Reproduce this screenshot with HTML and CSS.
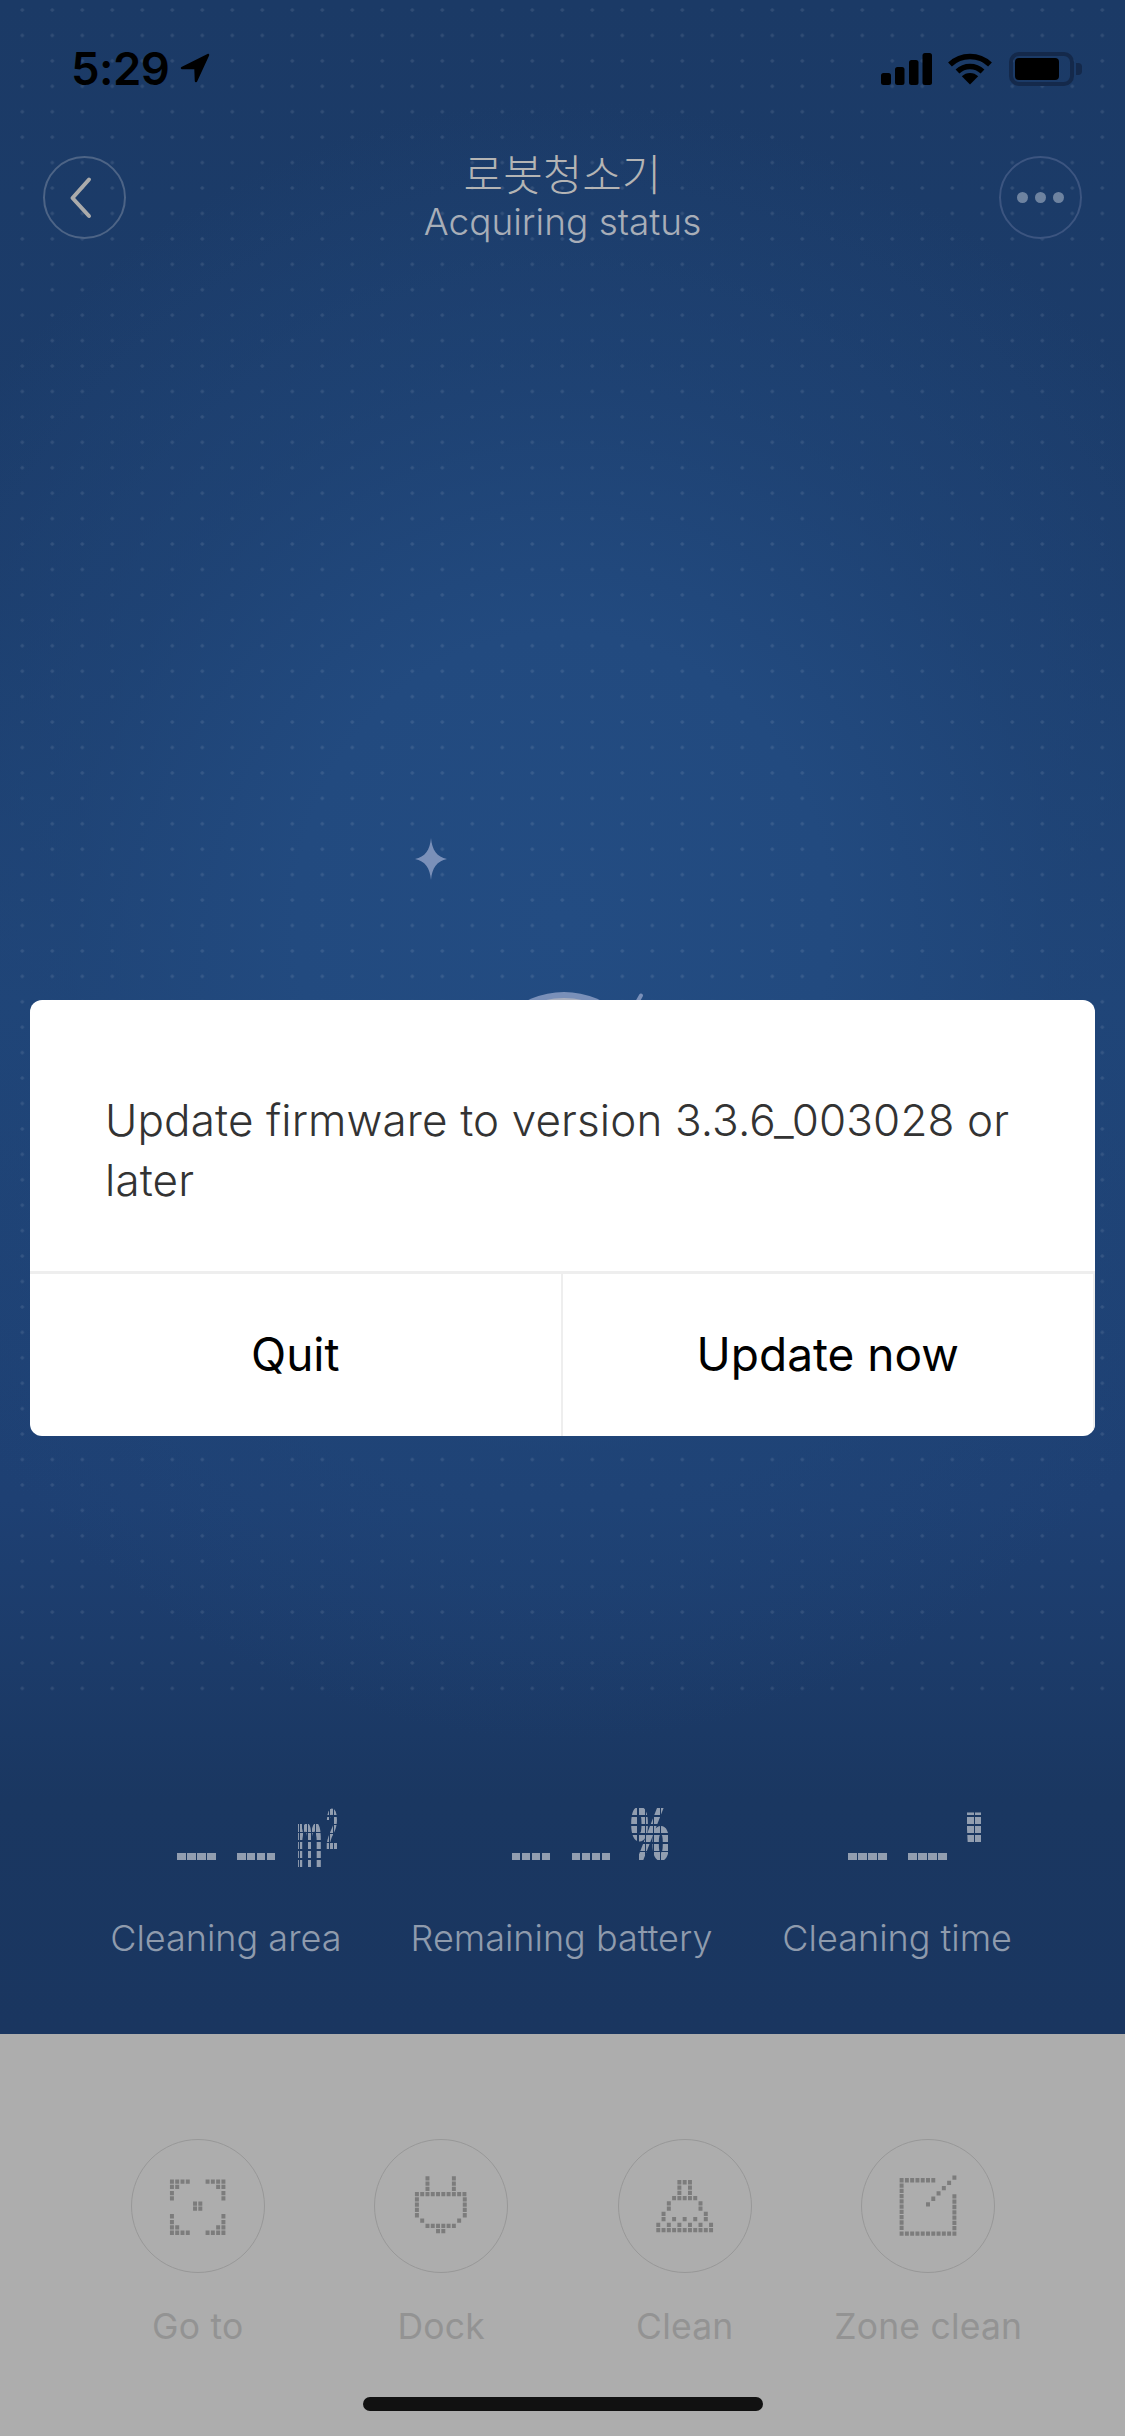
FILE: index.html
```html
<!DOCTYPE html>
<html lang="en">
<head>
<meta charset="utf-8">
<title>로봇청소기</title>
<link rel="stylesheet" href="styles.css">
</head>
<body>
<div class="screen">
  <svg class="grid" width="1125" height="1705" aria-hidden="true">
    <defs>
      <pattern id="plus" x="7.3" y="-2.7" width="30" height="25.43" patternUnits="userSpaceOnUse">
        <path d="M15 10.7v4M13 12.7h4" stroke="#fff" stroke-opacity=".13" stroke-width="1" fill="none"/>
      </pattern>
    </defs>
    <rect width="1125" height="1705" fill="url(#plus)"/>
  </svg>

  <div class="status">
    <div class="status-left">
      <span class="time">5:29</span>
      <svg class="arrow" width="30" height="30" viewBox="0 0 30 30"><path d="M28 2 2 15h13.5L16 28z" fill="#000" stroke="#000" stroke-width="2.5" stroke-linejoin="round"/></svg>
    </div>
    <div class="status-right">
      <svg width="51" height="32" viewBox="0 0 51 32"><rect x="0" y="20" width="10" height="12" rx="2.5"/><rect x="14" y="14" width="9.5" height="18" rx="2.5"/><rect x="28" y="7" width="9.5" height="25" rx="2.5"/><rect x="41.500" y="0" width="9.500" height="32" rx="2.5"/></svg>
      <svg class="wifi" width="46" height="34" viewBox="0 0 46 34"><path d="M3 13.500A29 29 0 0 1 43 13.500M10.500 20.500A18 18 0 0 1 35.500 20.500" fill="none" stroke="#000" stroke-width="5.500"/><path d="M23 33.500 14.800 25.300A11.600 11.600 0 0 1 31.200 25.300z"/></svg>
      <div class="battery"><div class="battery-fill"></div></div>
      <div class="battery-cap"></div>
    </div>
  </div>

  <header class="nav">
    <button class="round back">
      <svg width="30" height="45" viewBox="0 0 30 45"><path d="M24 4.500 7.500 23 24 41" fill="none" stroke="#ababab" stroke-width="4" stroke-linecap="round" stroke-linejoin="round"/></svg>
    </button>
    <div class="title-block">
      <div class="title">로봇청소기</div>
      <div class="subtitle">Acquiring status</div>
    </div>
    <button class="round more"><i></i><i></i><i></i></button>
  </header>

  <main class="hero"></main>

  <section class="stats">
    <div class="stat">
      <div class="value"><span class="dash"></span><span class="dash"></span><span class="unit unit-m"><span>m</span></span><span class="unit unit-sq"><span>2</span></span></div>
      <div class="stat-label">Cleaning area</div>
    </div>
    <div class="stat">
      <div class="value"><span class="dash"></span><span class="dash"></span><span class="unit unit-pct"><span>%</span></span></div>
      <div class="stat-label">Remaining battery</div>
    </div>
    <div class="stat">
      <div class="value"><span class="dash"></span><span class="dash"></span><span class="unit unit-min"><span>'</span></span></div>
      <div class="stat-label">Cleaning time</div>
    </div>
  </section>

  <nav class="panel">
    <div class="action">
      <div class="ring"><svg viewBox="92 119 400 400"><path class="cells" d="M207 245h60M315 245h60M207 261h28M347 261h28M207 280h12M363 280h12M207 296h12M363 296h12M277 312h28M277 327h28M207 350h12M363 350h12M207 368h12M363 368h12M207 384h28M347 384h28M207 400h60M315 400h60"/></svg></div>
      <span>Go to</span>
    </div>
    <div class="action">
      <div class="ring"><svg viewBox="826 119 400 400"><path class="cells" d="M979 235h12M1059 235h12M979 251h12M1059 251h12M979 267h12M1059 267h12M947 283h156M947 299h12M1092 299h12M947 315h12M1092 315h12M947 331h12M1092 331h12M947 347h12M1092 347h12M963 363h12M1075 363h12M979 379h92M1011 395h28"/></svg></div>
      <span>Dock</span>
    </div>
    <div class="action">
      <div class="ring"><svg viewBox="116 119 400 400"><path class="cells" d="M293 247h44M293 263h12M325 263h12M293 279h12M325 279h12M277 295h76M261 311h12M357 311h12M261 327h12M357 327h12M245 343h12M373 343h12M245 359h12M277 359h12M309 359h12M341 359h12M373 359h12M229 376h12M261 376h12M293 376h12M325 376h12M357 376h12M389 376h12M229 392h172"/></svg></div>
      <span>Clean</span>
    </div>
    <div class="action">
      <div class="ring"><svg viewBox="845 119 400 400"><path class="cells" d="M959 241h108M959 257h12M959 273h12M959 289h12M959 305h12M959 321h12M959 337h12M959 353h12M959 369h12M959 385h12M1119 290h12M1119 306h12M1119 322h12M1119 338h12M1119 354h12M1119 370h12M1119 386h12M959 403h172M1119 233h12M1103 249h12M1087 265h12M1071 281h12M1055 297h12M1039 314h12"/></svg></div>
      <span>Zone clean</span>
    </div>
  </nav>

  <div class="sparkle">
    <svg width="32" height="42" viewBox="0 0 32 42"><path d="M16 0C17 12 22 19 32 21 22 23 17 30 16 42 15 30 10 23 0 21 10 19 15 12 16 0z" fill="#7a90b9"/></svg>
  </div>
  <div class="moon"><div class="moon-inner"></div></div>
  <div class="streak"></div>

  <div class="dialog">
    <p class="dialog-text">Update firmware to version 3.3.6_003028 or later</p>
    <div class="dialog-actions">
      <div class="dialog-btn">Quit</div>
      <div class="dialog-btn">Update now</div>
    </div>
  </div>

  <div class="home"></div>
</div>
</body>
</html>
```
FILE: styles.css
```css
* { box-sizing: border-box; }
html, body { margin: 0; padding: 0; }
body { width: 1125px; height: 2436px; overflow: hidden; font-family: Inter, "Noto Sans CJK KR", sans-serif; }

.screen {
  position: relative;
  width: 1125px;
  height: 2436px;
  display: flex;
  flex-direction: column;
  overflow: hidden;
  background:
    radial-gradient(ellipse 760px 820px at 50% 920px, #234c82 0%, #224a7f 35%, rgba(32,70,121,.6) 65%, rgba(28,58,102,0) 100%),
    linear-gradient(#1b3a66 0, #1c3d6c 600px, #1f4477 1000px, #1e4073 1500px, #1a3761 1800px, #1a3660 2034px);
}

.grid { position: absolute; left: 0; top: 0; }

/* status bar */
.status {
  position: relative;
  height: 104px;
  padding: 34px 43px 0 71px;
  display: flex;
  justify-content: space-between;
  align-items: center;
}
.status-left { display: flex; align-items: center; gap: 11px; }
.time { font-size: 45.500px; font-weight: 600; color: #000; line-height: 44px; letter-spacing: -.6px; }
.arrow { display: block; margin-top: -2px; }
.status-right { display: flex; align-items: center; }
.status-right svg { display: block; }
.wifi { margin: -2px 16px 0 15px; }
.battery {
  width: 65px;
  height: 34px;
  border: 4px solid #14294b;
  border-radius: 10px;
  padding: 2px;
}
.battery-fill { width: 44px; height: 100%; background: #000; border-radius: 4px; }
.battery-cap { width: 6px; height: 12px; margin-left: 2px; background: #14294b; border-radius: 0 4px 4px 0; }

/* navigation */
.nav {
  position: relative;
  margin-top: 52px;
  padding: 0 43px;
  display: flex;
  justify-content: space-between;
  align-items: flex-start;
}
.round {
  width: 83px;
  height: 83px;
  padding: 0;
  border: 2px solid #4d6486;
  border-radius: 50%;
  background: transparent;
  display: flex;
  align-items: center;
  justify-content: center;
}
.back svg { margin-right: 10px; }
.more { gap: 6.500px; border-color: #3c5580; }
.more i { width: 11.500px; height: 11.500px; border-radius: 50%; background: #6e83a0; }
.title-block { text-align: center; margin-top: -6px; }
.title {
  font-family: "Noto Sans CJK KR", sans-serif;
  font-weight: 300;
  font-size: 43px;
  line-height: 44px;
  color: #b4b4b4;
}
.subtitle { margin-top: 6px; font-size: 37px; font-weight: 300; line-height: 44px; color: #a8aeb8; }

.hero { flex: 1; }

/* stats */
.stats {
  position: relative;
  display: grid;
  grid-template-columns: repeat(3, 1fr);
  padding: 0 60px 74px 58px;
}
.stat { display: flex; flex-direction: column; align-items: center; }
.value {
  align-self: stretch;
  height: 60px;
  padding-left: calc(50% - 49px);
  display: flex;
  align-items: flex-start;
}
.dash {
  width: 40px;
  height: 7px;
  margin: 45px 20px 0 0;
  background: repeating-linear-gradient(90deg, #929eb0 0 8.500px, transparent 8.500px 10px);
}
.unit {
  display: block;
  color: #929eb0;
  font-family: "Liberation Sans", sans-serif;
  font-weight: 700;
  white-space: nowrap;
  -webkit-mask-composite: source-in;
  mask-composite: intersect;
}
.unit span { display: inline-block; transform-origin: 0 0; }
.unit-m {
  width: 27px; height: 44px; margin: 16px 0 0 -1px;
  font-size: 81px; line-height: 44px;
  -webkit-mask-image: repeating-linear-gradient(90deg, #000 0 3px, transparent 3px 3.900px), repeating-linear-gradient(180deg, #000 0 7.500px, transparent 7.500px 8.900px);
  mask-image: repeating-linear-gradient(90deg, #000 0 3px, transparent 3px 3.900px), repeating-linear-gradient(180deg, #000 0 7.500px, transparent 7.500px 8.900px);
}
.unit-m span { transform: translateY(-7px) scaleX(.37); }
.unit-sq {
  width: 12px; height: 42px; margin-left: 3px;
  font-size: 57px; line-height: 42px;
  -webkit-mask-image: repeating-linear-gradient(90deg, #000 0 3px, transparent 3px 3.900px), repeating-linear-gradient(180deg, #000 0 7.500px, transparent 7.500px 8.700px);
  mask-image: repeating-linear-gradient(90deg, #000 0 3px, transparent 3px 3.900px), repeating-linear-gradient(180deg, #000 0 7.500px, transparent 7.500px 8.700px);
}
.unit-sq span { transform: scaleX(.38); }
.unit-pct {
  width: 38px; height: 52px; margin-left: -1px;
  font-size: 72px; line-height: 52px;
  -webkit-text-stroke: 3px #929eb0;
  -webkit-mask-image: repeating-linear-gradient(90deg, #000 0 6.500px, transparent 6.500px 7.600px), repeating-linear-gradient(180deg, #000 0 7.500px, transparent 7.500px 8.900px);
  mask-image: repeating-linear-gradient(90deg, #000 0 6.500px, transparent 6.500px 7.600px), repeating-linear-gradient(180deg, #000 0 7.500px, transparent 7.500px 8.900px);
}
.unit-pct span { transform: scaleX(.6); }
.unit-min {
  width: 14px; height: 34px; margin-left: -1px;
  font-size: 130px; line-height: 110px;
  -webkit-mask-image: repeating-linear-gradient(90deg, #000 0 6.500px, transparent 6.500px 7.600px), repeating-linear-gradient(180deg, #000 0 7.500px, transparent 7.500px 8.900px);
  mask-image: repeating-linear-gradient(90deg, #000 0 6.500px, transparent 6.500px 7.600px), repeating-linear-gradient(180deg, #000 0 7.500px, transparent 7.500px 8.900px);
}
.unit-min span { transform: translate(-8px, -6px); }
.stat-label {
  margin-top: 48px;
  font-size: 36px;
  font-weight: 300;
  line-height: 44px;
  color: #8f9bad;
  white-space: nowrap;
}

/* bottom panel */
.panel {
  position: relative;
  height: 402px;
  padding: 105px 75px 0 76px;
  background: #adadad;
  display: grid;
  grid-template-columns: repeat(4, 1fr);
  align-content: start;
}
.action { display: flex; flex-direction: column; align-items: center; }
.ring {
  width: 134px;
  height: 134px;
  border: 1.500px solid #989898;
  border-radius: 50%;
  overflow: hidden;
}
.ring svg { display: block; width: 100%; height: 100%; }
.cells { fill: none; stroke: #7c7c7c; stroke-width: 13; stroke-dasharray: 12 4; }
.action span {
  margin-top: 32px;
  font-size: 35.500px;
  font-weight: 400;
  line-height: 44px;
  letter-spacing: .2px;
  color: #939393;
}

/* floating artwork behind the dialog */
.sparkle { position: absolute; left: 415px; top: 838px; line-height: 0; }
.moon {
  position: absolute;
  left: 479px;
  top: 992px;
  width: 170px;
  height: 170px;
  border-radius: 50%;
  background: #7a90b9;
  overflow: hidden;
}
.moon-inner { width: 100px; height: 60px; margin: 6px auto 0; border-radius: 50%; background: #a9afbf; }
.streak {
  position: absolute;
  left: 637px;
  top: 993px;
  width: 4px;
  height: 12px;
  background: #7a90b9;
  border-radius: 2px;
  transform: rotate(30deg);
}

/* dialog */
.dialog {
  position: absolute;
  left: 30px;
  top: 1000px;
  width: 1065px;
  height: 436px;
  border-radius: 12px;
  background: #fff;
  display: flex;
  flex-direction: column;
  overflow: hidden;
}
.dialog-text {
  margin: 0;
  height: 271px;
  padding: 90px 70px 0 75px;
  font-size: 44px;
  font-weight: 300;
  line-height: 60px;
  letter-spacing: .12px;
  color: #333;
}
.dialog-actions {
  flex: 1;
  display: grid;
  grid-template-columns: 1fr 1fr;
  border-top: 3px solid #eeeeee;
}
.dialog-btn {
  display: flex;
  align-items: center;
  justify-content: center;
  padding-bottom: 2px;
  font-size: 46px;
  font-weight: 400;
  color: #000;
  border-right: 2px solid #eeeeee;
}

.home {
  position: absolute;
  left: 363px;
  top: 2397px;
  width: 400px;
  height: 14px;
  border-radius: 7px;
  background: #111;
}
```
